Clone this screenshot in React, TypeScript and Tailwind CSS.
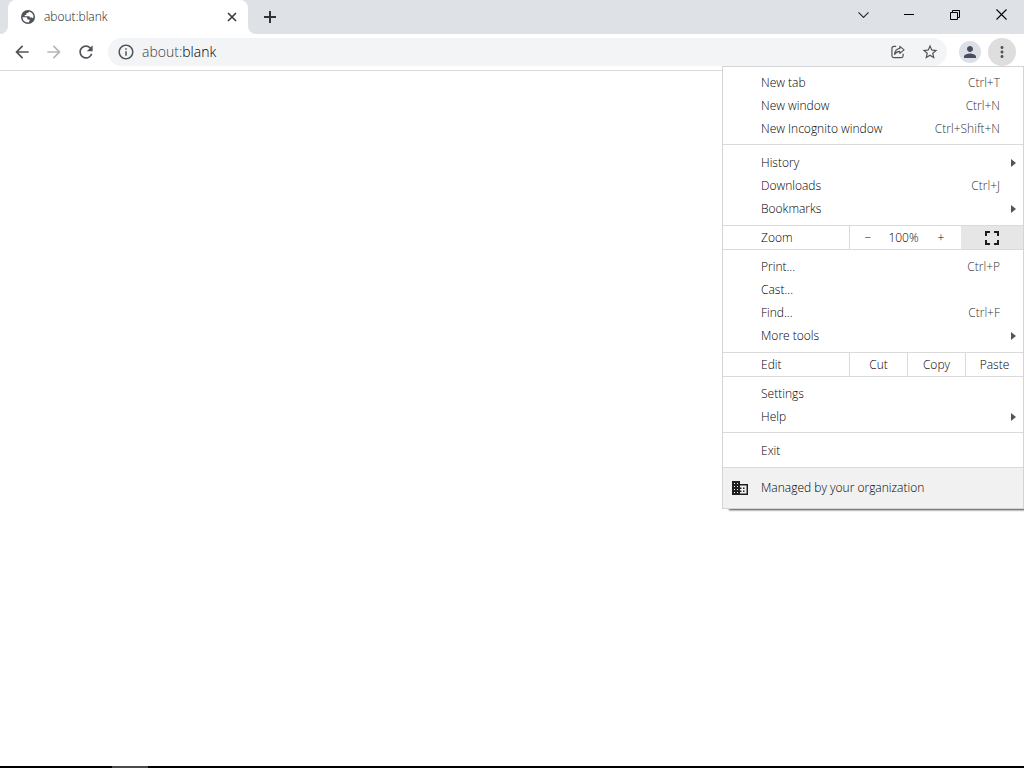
import React from 'react';
import {
  MdArrowBack,
  MdArrowForward,
  MdInfoOutline,
  MdMoreVert,
  MdPerson,
  MdRefresh,
  MdStarBorder,
} from 'react-icons/md';
import clsx from 'clsx';

interface MenuItemProps {
  label: string;
  shortcut?: string;
  submenu?: boolean;
}

const MenuItem: React.FC<MenuItemProps> = ({ label, shortcut, submenu }) => (
  <button
    role="menuitem"
    className="flex h-[23px] w-full items-center pl-[38px] text-left hover:bg-gray-100"
  >
    <span className="flex-1">{label}</span>
    {shortcut && <span className="pr-[23px] text-[#333]">{shortcut}</span>}
    {submenu && (
      <svg className="mr-[7px] h-2 w-[5px]" viewBox="0 0 5 8" fill="#555">
        <path d="M0 0l5 4-5 4z" />
      </svg>
    )}
  </button>
);

interface MenuGroupProps {
  items: MenuItemProps[];
  className?: string;
}

const MenuGroup: React.FC<MenuGroupProps> = ({ items, className }) => (
  <div className={clsx('border-b border-[#dadada]', className)}>
    {items.map((item) => (
      <MenuItem key={item.label} {...item} />
    ))}
  </div>
);

const fileItems: MenuItemProps[] = [
  { label: 'New tab', shortcut: 'Ctrl+T' },
  { label: 'New window', shortcut: 'Ctrl+N' },
  { label: 'New Incognito window', shortcut: 'Ctrl+Shift+N' },
];

const historyItems: MenuItemProps[] = [
  { label: 'History', submenu: true },
  { label: 'Downloads', shortcut: 'Ctrl+J' },
  { label: 'Bookmarks', submenu: true },
];

const pageItems: MenuItemProps[] = [
  { label: 'Print...', shortcut: 'Ctrl+P' },
  { label: 'Cast...' },
  { label: 'Find...', shortcut: 'Ctrl+F' },
  { label: 'More tools', submenu: true },
];

const settingsItems: MenuItemProps[] = [
  { label: 'Settings' },
  { label: 'Help', submenu: true },
];

const TabStrip = () => (
  <div className="flex h-[34px] bg-[#dee1e6] pl-2">
    <div className="relative flex w-60 items-center rounded-t-lg bg-white pl-3 pr-[10px]">
      {/* curved feet of the active tab */}
      <svg className="absolute -left-2 bottom-0 size-2" viewBox="0 0 8 8" fill="#fff">
        <path d="M8 0v8H0a8 8 0 0 0 8-8z" />
      </svg>
      <svg className="absolute -right-2 bottom-0 size-2" viewBox="0 0 8 8" fill="#fff">
        <path d="M0 0v8h8a8 8 0 0 1-8-8z" />
      </svg>
      <svg className="size-4" viewBox="0 0 16 16">
        <circle cx="8" cy="8" r="7" fill="#505458" />
        <path
          d="M2.600 8.300h3.200c1 0 1.500.6 1.500 1.400v.8h1.500c.7 0 1 .5.800 1.100L9 13.300c-3.500.7-6.400-1.600-6.400-5z"
          fill="#fff"
        />
        <path
          d="M9.300 2.700c-.2.800-.8 1.200-1.600 1.200H6.500v1.200c0 .6-.4 1-1 1h-.8v1.100h3.800c.9 0 1.400.5 1.400 1.300h1.300c.9 0 1.200.6 2 .6.900-2.800-.8-5.700-3.900-6.400z"
          fill="#fff"
        />
      </svg>
      <span className="flex-1 pl-2 text-xs text-[#16181a]">about:blank</span>
      <button aria-label="Close tab" className="flex size-3 items-center justify-center">
        <svg className="size-[10px]" viewBox="0 0 10 10" stroke="#3c4043" strokeWidth="1.7">
          <path d="M1 1l8 8M9 1l-8 8" />
        </svg>
      </button>
    </div>
    <button aria-label="New tab" className="flex w-11 items-center justify-center">
      <svg className="size-3" viewBox="0 0 12 12" stroke="#303438" strokeWidth="2">
        <path d="M6 0v12M0 6h12" />
      </svg>
    </button>
    <div className="ml-auto flex pb-[5px]">
      <button aria-label="Search tabs" className="flex w-[46px] items-center justify-center">
        <svg className="h-[6px] w-[11px]" viewBox="0 0 11 6" fill="none" stroke="#222" strokeWidth="1.1">
          <path d="M.5.4l5 5 5-5" />
        </svg>
      </button>
      <button aria-label="Minimize" className="flex w-[46px] items-center justify-center">
        <svg className="h-px w-[10px]" viewBox="0 0 10 1" fill="#000">
          <path d="M0 0h10v1H0z" />
        </svg>
      </button>
      <button aria-label="Restore" className="flex w-[46px] items-center justify-center">
        <svg className="size-[10px]" viewBox="0 0 10 10" fill="none" stroke="#000">
          <path d="M.5 2.5h7v7h-7zM2.5 2.5v-2h7v7h-2" />
        </svg>
      </button>
      <button aria-label="Close" className="flex w-[46px] items-center justify-center">
        <svg className="size-[11px]" viewBox="0 0 11 11" stroke="#000" strokeWidth="1.1">
          <path d="M.5.5l10 10M10.5.5l-10 10" />
        </svg>
      </button>
    </div>
  </div>
);

const Toolbar = () => (
  <div className="flex h-[37px] items-center border-b border-[#d9dadc] bg-white px-2 text-[#505458]">
    <div className="flex items-center gap-1">
      <button aria-label="Back" className="flex size-7 items-center justify-center">
        <MdArrowBack className="size-5" />
      </button>
      <button aria-label="Forward" disabled className="flex size-7 items-center justify-center text-[#b4b6b8]">
        <MdArrowForward className="size-5" />
      </button>
      <button aria-label="Reload" className="flex size-7 items-center justify-center">
        <MdRefresh className="size-5" />
      </button>
    </div>
    <div className="relative ml-2 flex h-7 flex-1 items-center rounded-full bg-[#f3f4f6] pl-[9px] pr-[7px]">
      <MdInfoOutline className="size-[18px]" />
      <input
        aria-label="Address bar"
        defaultValue="about:blank"
        className="ml-[7px] min-w-0 flex-1 bg-transparent text-sm text-transparent outline-none"
      />
      {/* the scheme is dimmed, so the address is drawn over the field */}
      <span className="pointer-events-none absolute left-[34px] text-sm text-[#3c4043]">
        about:<span className="text-black">blank</span>
      </span>
      <button aria-label="Share this page" className="mr-3 flex size-5 items-center justify-center">
        <svg className="size-[14px]" viewBox="0 0 15 15" fill="none" stroke="currentColor" strokeWidth="1.3" strokeLinejoin="round">
          <path d="M5.500 1.500H3a2 2 0 0 0-2 2v8a2 2 0 0 0 2 2h8a2 2 0 0 0 2-2V9.500" />
          <path d="M9.500 1.500L14 5.200 9.500 9V6.900C7 6.900 5.200 7.800 3.800 10c.3-3.400 2.200-6 5.700-6.400z" />
        </svg>
      </button>
      <button aria-label="Bookmark this tab" className="flex size-5 items-center justify-center">
        <MdStarBorder className="size-[18px]" />
      </button>
    </div>
    <button aria-label="Profile" className="ml-3 flex size-[22px] items-center justify-center rounded-full bg-[#dcdfe6] text-[#474d5c]">
      <MdPerson className="size-[18px]" />
    </button>
    <button aria-label="Menu" aria-expanded="true" className="ml-[7px] flex size-7 items-center justify-center rounded-full bg-[#dedede]">
      <MdMoreVert className="size-[18px]" />
    </button>
  </div>
);

const AppMenu = () => (
  <div
    role="menu"
    className="absolute right-0 top-[66px] w-[302px] border border-[#d4d4d4] bg-white text-xs text-black shadow-[6px_2px_2px_-1px_rgba(0,0,0,0.75)]"
  >
    <MenuGroup items={fileItems} className="py-1" />
    <MenuGroup items={historyItems} className="pb-[5px] pt-[6px]" />
    <div className="flex h-6 border-b border-[#dadada]">
      <span className="flex flex-1 items-center pl-[38px]">Zoom</span>
      <div className="flex w-[112px] items-center border-l border-[#dadada]">
        <button aria-label="Zoom out" className="w-9 text-center">−</button>
        <span className="flex-1 text-center">100%</span>
        <button aria-label="Zoom in" className="w-10 text-center">+</button>
      </div>
      <button aria-label="Full screen" className="flex w-[62px] items-center justify-center bg-[#e6e6e6]">
        <svg className="size-[14px]" viewBox="0 0 14 14" fill="none" stroke="#1c1c1c" strokeWidth="2">
          <path d="M1 5V1h4M9 1h4v4M13 9v4H9M5 13H1V9" />
        </svg>
      </button>
    </div>
    <MenuGroup items={pageItems} className="py-[5px]" />
    <div className="flex h-6 border-b border-[#dadada]">
      <span className="flex flex-1 items-center pl-[38px]">Edit</span>
      {['Cut', 'Copy', 'Paste'].map((action) => (
        <button key={action} className="w-[58px] border-l border-[#dadada] text-center">
          {action}
        </button>
      ))}
    </div>
    <MenuGroup items={settingsItems} className="pb-1 pt-[5px]" />
    <MenuGroup items={[{ label: 'Exit' }]} className="pb-[5px] pt-[6px]" />
    <button role="menuitem" className="flex h-10 w-full items-center bg-[#f1f1f1] pl-[9px] text-left">
      <svg className="h-[14px] w-4" viewBox="0 0 16 14">
        <path d="M0 0h8v3h8v11H0z" fill="#202020" />
        <path
          d="M2 2h1v1H2zM5 2h1v1H5zM2 5h1v1H2zM5 5h1v1H5zM2 8h1v1H2zM5 8h1v1H5zM2 11h1v1H2zM5 11h1v1H5zM8 4.500h6.500v8H8v-1.500h1.500V9.500H8V8h1.500V6.500H8z"
          fill="#f1f1f1"
        />
        <path d="M11 6.500h1.500V8H11zM11 9.500h1.500V11H11z" fill="#202020" />
      </svg>
      <span className="pl-[13px]">Managed by your organization</span>
    </button>
  </div>
);

const App: React.FC = () => {
  return (
    <div className="relative flex min-h-screen flex-col overflow-hidden bg-white font-['Open_Sans',sans-serif] font-light">
      <TabStrip />
      <Toolbar />
      <main className="flex-1" />
      <AppMenu />
      {/* top edge of the taskbar */}
      <div className="flex h-[2px] bg-black pl-28">
        <div className="w-9 bg-[#4a4a4a]" />
      </div>
    </div>
  );
};

export default App;
